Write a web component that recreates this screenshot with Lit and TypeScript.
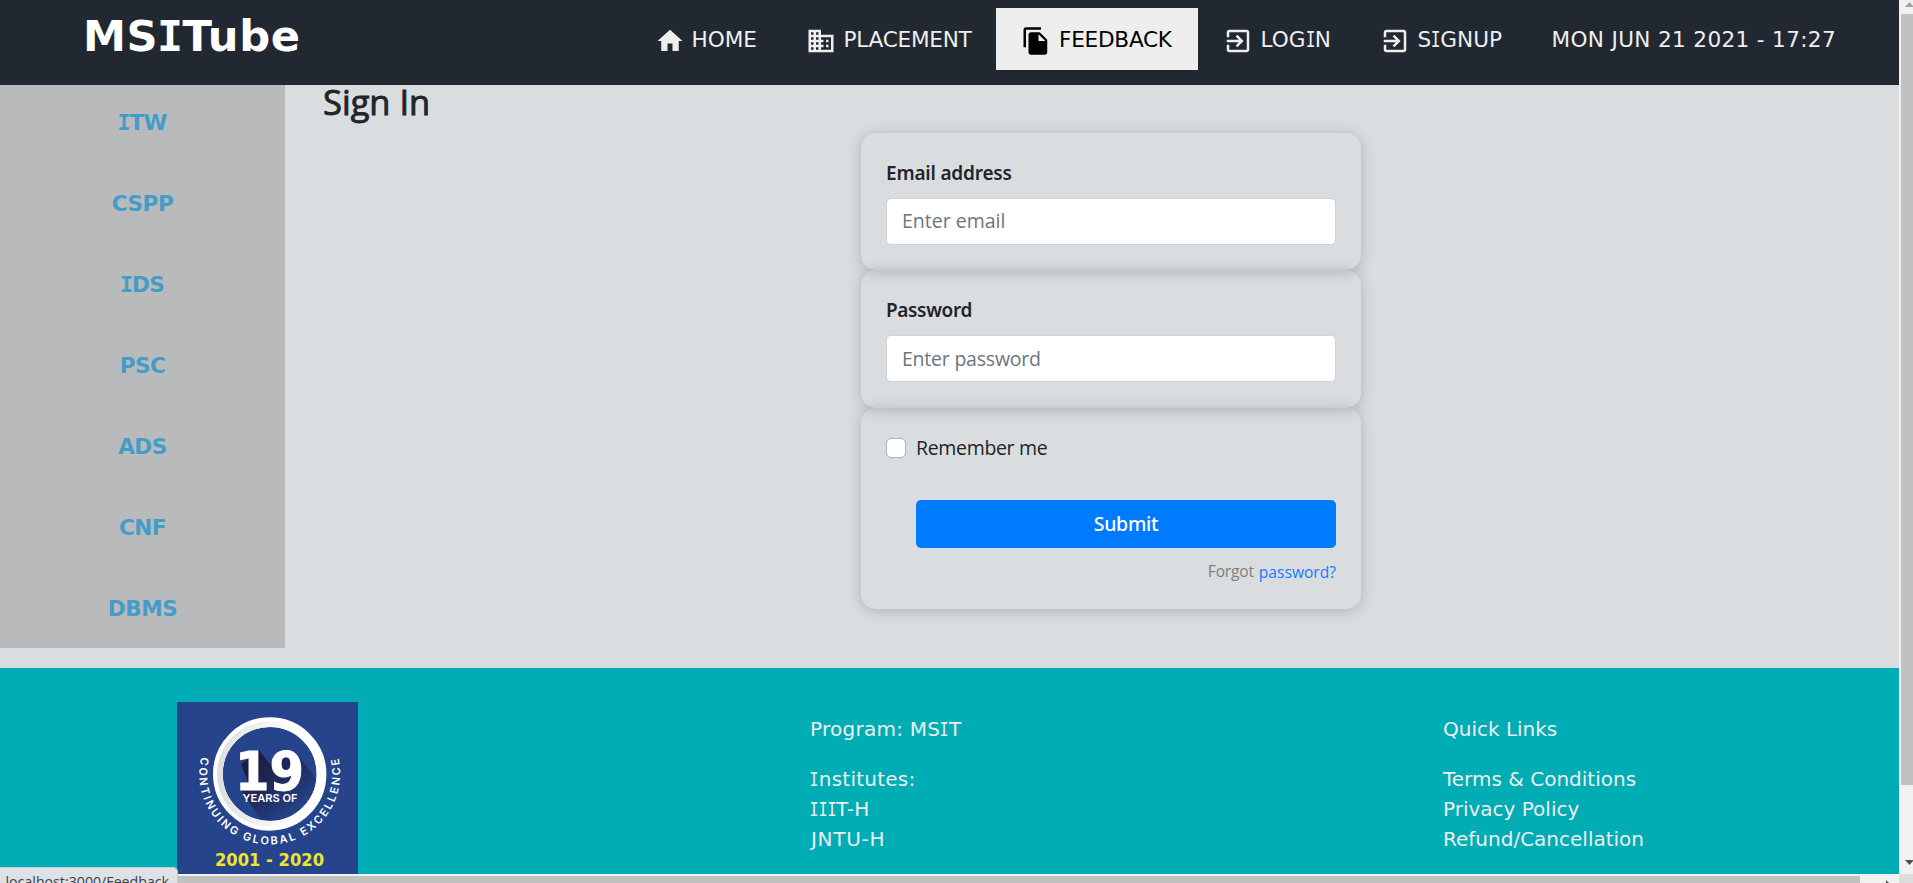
import { LitElement, html, css, svg } from "lit";
import { customElement, property } from "lit/decorators.js";

const ICONS = {
  home: svg`<path d="M10 20v-6h4v6h5v-8h3L12 3 2 12h3v8z"/>`,
  business: svg`<path d="M12 7V3H2v18h20V7H12zM6 19H4v-2h2v2zm0-4H4v-2h2v2zm0-4H4V9h2v2zm0-4H4V5h2v2zm4 12H8v-2h2v2zm0-4H8v-2h2v2zm0-4H8V9h2v2zm0-4H8V5h2v2zm10 12h-8v-2h2v-2h-2v-2h2v-2h-2V9h8v10zm-2-8h-2v2h2v-2zm0 4h-2v2h2v-2z"/>`,
  copy: svg`<path d="M16 1H4c-1.1 0-2 .9-2 2v14h2V3h12V1zm-1 4l6 6v10c0 1.1-.9 2-2 2H8c-1.1 0-2-.9-2-2V7c0-1.1.9-2 2-2h7zm-1 7h5.500L14 6.500V12z"/>`,
  enter: svg`<path d="M10.090 15.590L11.500 17l5-5-5-5-1.410 1.410L12.670 11H3v2h9.670l-2.580 2.590zM19 3H5c-1.110 0-2 .9-2 2v4h2V5h14v14H5v-4H3v4c0 1.100.89 2 2 2h14c1.100 0 2-.9 2-2V5c0-1.100-.9-2-2-2z"/>`,
};

// The capital I is set with slab serifs.
const slab = (text: string) =>
  text.split(/(I)/).filter(Boolean).map((part) => (part === "I" ? html`<span class="slab">I</span>` : part));

const slabStyles = css`
  .slab {
    display: inline-block;
    font-family: "DejaVu Sans Mono", monospace;
    line-height: 1;
    margin: 0 -0.09em;
    transform: scaleX(0.75);
  }
  .bold .slab {
    margin: 0 -0.028em;
    transform: none;
  }
`;

@customElement("site-header")
class SiteHeader extends LitElement {
  static styles = [
    slabStyles,
    css`
      :host {
        display: flex;
        box-sizing: border-box;
        height: 85px;
        padding: 8px 0 15px 83px;
        background: #222831;
        color: #eee;
        font-family: "DejaVu Sans", sans-serif;
      }
      .logo {
        width: 547px;
        color: #fff;
        font-size: 43.2px;
        line-height: 56px;
        letter-spacing: 0.6px;
      }
      .bold {
        font-weight: bold;
      }
      nav {
        display: grid;
        grid-template-columns: 150.5px 215.5px 202px 157px 171.500px auto;
        height: 62px;
        font-size: 21.6px;
      }
      .link {
        display: flex;
        align-items: center;
        gap: 7.5px;
        padding-left: 25px;
        white-space: nowrap;
      }
      .snug {
        gap: 6.5px;
      }
      .tight {
        letter-spacing: -0.25px;
        gap: 8px;
      }
      .date {
        letter-spacing: 0.33px;
      }
      .active {
        background: #eee;
        color: #000;
      }
      svg {
        width: 30px;
        height: 30px;
        flex: none;
        margin-top: 4px;
        fill: currentColor;
      }
    `,
  ];
  render() {
    const link = (icon: keyof typeof ICONS, text: string, cls = "") =>
      html`<a class="link ${cls}"><svg viewBox="0 0 24 24">${ICONS[icon]}</svg><span>${slab(text)}</span></a>`;
    return html`
      <div class="logo bold">${slab("MSITube")}</div>
      <nav>
        ${link("home", "HOME", "snug")}${link("business", "PLACEMENT", "tight")}${link("copy", "FEEDBACK", "active tight")}
        ${link("enter", "LOGIN")}${link("enter", "SIGNUP")}
        <span class="link date">MON JUN 21 2021 - 17:27</span>
      </nav>
    `;
  }
}

@customElement("course-menu")
class CourseMenu extends LitElement {
  static styles = [
    slabStyles,
    css`
      :host {
        display: block;
        box-sizing: border-box;
        width: 285px;
        height: 563px;
        background: #b9babb;
      }
      a {
        display: block;
        height: 81px;
        text-align: center;
        color: #459cc9;
        font: bold 21.6px/75px "DejaVu Sans", sans-serif;
        letter-spacing: -0.5px;
      }
    `,
  ];
  render() {
    return ["ITW", "CSPP", "IDS", "PSC", "ADS", "CNF", "DBMS"].map((c) => html`<a class="bold">${slab(c)}</a>`);
  }
}

@customElement("sign-in-form")
class SignInForm extends LitElement {
  static styles = css`
    :host {
      display: block;
      font: 19.5px/30px "Open Sans", "Noto Sans", sans-serif;
      color: #212529;
    }
    h3 {
      margin: 0 0 15px 38px;
      font-size: 34.500px;
      line-height: 33px;
      font-weight: 400;
      -webkit-text-stroke: 0.9px #212529;
    }
    form {
      width: 500px;
      margin-left: 576px;
    }
    .card {
      box-sizing: border-box;
      height: 137.4px;
      padding: 25px;
      border-radius: 15px;
      box-shadow: 0 2px 15px rgba(0, 0, 0, 0.2);
    }
    .last {
      height: 201.2px;
    }
    .label {
      display: block;
      font-family: "Noto Sans", sans-serif;
      font-weight: 600;
      font-size: 19px;
      letter-spacing: -0.2px;
      margin-bottom: 10px;
    }
    .label.short {
      letter-spacing: -0.35px;
    }
    input {
      display: block;
      box-sizing: border-box;
      width: 450px;
      height: 47px;
      padding: 0 15px 2px;
      border: 1px solid #ced4da;
      border-radius: 5px;
      background: #fff;
      font: inherit;
      letter-spacing: 0;
    }
    .password {
      padding-bottom: 0;
    }
    input::placeholder {
      color: #6c757d;
      opacity: 1;
    }
    .password::placeholder {
      letter-spacing: -0.22px;
    }
    .remember {
      display: flex;
      align-items: center;
      gap: 10px;
      letter-spacing: -0.33px;
    }
    .box {
      box-sizing: border-box;
      width: 20px;
      height: 20px;
      border: 1px solid #adb5bd;
      border-radius: 5px;
      background: #fff;
    }
    button {
      display: block;
      width: 420px;
      height: 48px;
      margin: 37px 0 11px 30px;
      padding: 0;
      border: 0;
      border-radius: 5px;
      background: #007bff;
      color: #fff;
      font: 500 19.5px/48px "Noto Sans", sans-serif;
      letter-spacing: -0.3px;
    }
    .forgot {
      display: flex;
      justify-content: flex-end;
      gap: 5px;
      font-size: 15.6px;
      line-height: 24px;
      color: #7f7d7d;
    }
    .forgot span {
      letter-spacing: -0.2px;
    }
    .forgot a {
      color: #167bff;
      padding-top: 1px;
    }
  `;
  render() {
    return html`
      <h3>Sign In</h3>
      <form>
        <div class="card">
          <label class="label">Email address</label>
          <input type="email" placeholder="Enter email" />
        </div>
        <div class="card">
          <label class="label short">Password</label>
          <input class="password" type="password" placeholder="Enter password" />
        </div>
        <div class="card last">
          <div class="remember"><span class="box"></span><label>Remember me</label></div>
          <button type="button">Submit</button>
          <div class="forgot"><span>Forgot</span><a>password?</a></div>
        </div>
      </form>
    `;
  }
}

@customElement("anniversary-badge")
class AnniversaryBadge extends LitElement {
  static styles = css`
    :host,
    svg {
      display: block;
      width: 181px;
      height: 172px;
    }
    text {
      fill: #fff;
      font-family: Inter, sans-serif;
      font-weight: 600;
    }
    .number {
      font: bold 54px "DejaVu Sans", sans-serif;
      stroke: #fff;
      stroke-width: 1;
    }
    .years {
      font-size: 11px;
    }
    .motto {
      font-size: 11px;
    }
    .range {
      fill: #efe52f;
      font: bold 17.500px "DejaVu Sans", sans-serif;
    }
  `;
  render() {
    return html`<svg viewBox="0 0 181 172">
      <defs>
        <linearGradient id="ring" x1="0" x2="1">
          <stop offset="0" stop-color="#dcdfe0" />
          <stop offset=".35" stop-color="#efefef" />
          <stop offset=".8" stop-color="#fff" />
        </linearGradient>
        <linearGradient id="shade" gradientUnits="userSpaceOnUse" x1="78" y1="60" x2="118" y2="112">
          <stop offset="0" stop-color="#1d1c40" />
          <stop offset=".5" stop-color="#1f2c62" />
          <stop offset="1" stop-color="#26448b" />
        </linearGradient>
        <clipPath id="inner"><circle cx="92.7" cy="72" r="47" /></clipPath>
        <path id="arc" d="M24.300 54.900A70.500 70.500 0 1 0 161.100 54.900" />
      </defs>
      <rect width="181" height="172" fill="#26448b" />
      <g clip-path="url(#inner)">
        <path d="M64 62L82 48L93 62L118 50L142 80L125 118H84L64 88H74Z" fill="url(#shade)" />
      </g>
      <circle cx="92.7" cy="72" r="51.800" fill="none" stroke="#fff" stroke-width="9.800" />
      <circle cx="92.7" cy="72" r="49.800" fill="none" stroke="url(#ring)" stroke-width="5.600" />
      <text class="number" x="58" y="88" textLength="69" lengthAdjust="spacingAndGlyphs">19</text>
      <text class="years" x="65.500" y="100.300" textLength="55" lengthAdjust="spacingAndGlyphs">YEARS OF</text>
      <text class="motto"><textPath href="#arc" textLength="254">CONTINUING GLOBAL EXCELLENCE</textPath></text>
      <text class="range" x="38" y="164" textLength="109" lengthAdjust="spacingAndGlyphs">2001 - 2020</text>
    </svg>`;
  }
}

@customElement("site-footer")
class SiteFooter extends LitElement {
  static styles = [
    slabStyles,
    css`
      :host {
        display: grid;
        grid-template-columns: repeat(3, 633px);
        box-sizing: border-box;
        height: 206px;
        padding: 34px 0 0 177px;
        overflow: hidden;
        background: #00adb5;
        color: #eee;
        font: 20px/30px "DejaVu Sans", sans-serif;
      }
      .column {
        padding-top: 11.5px;
      }
      p {
        margin: 0 0 20px;
      }
      .wide {
        letter-spacing: 0.25px;
      }
      .wider {
        letter-spacing: 0.7px;
        padding-left: 1px;
      }
      .column div {
        white-space: nowrap;
      }
    `,
  ];
  render() {
    return html`
      <anniversary-badge></anniversary-badge>
      <div class="column wide">
        <p>${slab("Program: MSIT")}</p>
        <div>${slab("Institutes:")}</div>
        <div>${slab("IIIT-H")}</div>
        <div class="wider">JNTU-H</div>
      </div>
      <div class="column">
        <p>Quick Links</p>
        <div>Terms &amp; Conditions</div>
        <div>Privacy Policy</div>
        <div>Refund/Cancellation</div>
      </div>
    `;
  }
}

@customElement("scroll-bar")
class ScrollBar extends LitElement {
  @property({ reflect: true }) axis = "y";
  static styles = css`
    :host {
      display: flex;
      flex-direction: column;
      background: #f1f1f1;
    }
    :host([axis="x"]) {
      flex-direction: row;
    }
    .thumb {
      background: #c1c1c1;
      margin: 7px 0 0 2px;
      height: 771px;
    }
    :host([axis="x"]) .thumb {
      width: 1860px;
      height: auto;
      margin: 2px 0 0;
    }
    svg {
      display: block;
      flex: none;
      width: 8px;
      height: 5px;
      margin-left: 6px;
    }
    .up {
      margin-top: 2px;
      fill: #a3a3a3;
    }
    .down {
      margin-top: 75px;
      fill: #505050;
    }
    .right {
      height: 3px;
      width: 4px;
      margin: 6px 0 0 26px;
      fill: #505050;
    }
  `;
  render() {
    return this.axis === "x"
      ? html`<div class="thumb"></div><svg class="right" viewBox="0 0 4 3"><path d="M0 0l3 3H0z" /></svg>`
      : html`<svg class="up" viewBox="0 0 8 5"><path d="M0 5L4.500 0L9 5z" /></svg>
          <div class="thumb"></div>
          <svg class="down" viewBox="0 0 8 5"><path d="M0 0h9L4.500 5z" /></svg>`;
  }
}

@customElement("app-root")
class AppRoot extends LitElement {
  static styles = css`
    :host {
      display: grid;
      position: relative;
      grid-template: 874px 9px / 1899px 14px;
      width: 1913px;
      height: 883px;
      overflow: hidden;
      background: #dadde0;
    }
    .main {
      display: flex;
      height: 583px;
    }
    .corner {
      background: #dcdcdc;
    }
    .status {
      position: absolute;
      left: 0;
      bottom: 0;
      box-sizing: border-box;
      width: 178px;
      height: 16px;
      padding: 7px 0 0 5.500px;
      overflow: hidden;
      border: 1px solid #c9ccd1;
      border-width: 1px 1px 0 0;
      border-radius: 0 5px 0 0;
      background: #dee1e6;
      color: #3c4043;
      font: 14.200px/14px "Open Sans", sans-serif;
      white-space: nowrap;
    }
  `;
  render() {
    return html`
      <div class="page">
        <site-header></site-header>
        <div class="main">
          <course-menu></course-menu>
          <sign-in-form></sign-in-form>
        </div>
        <site-footer></site-footer>
      </div>
      <scroll-bar axis="y"></scroll-bar>
      <scroll-bar axis="x"></scroll-bar>
      <div class="corner"></div>
      <div class="status">localhost:3000/Feedback</div>
    `;
  }
}
